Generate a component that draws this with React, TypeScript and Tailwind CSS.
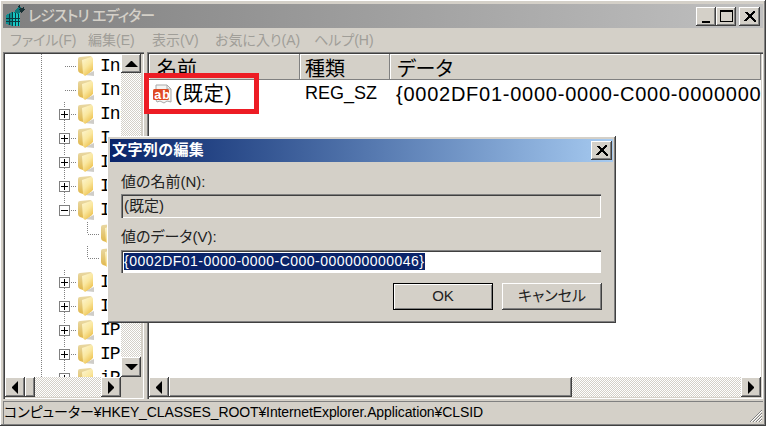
const jp = "font-['Liberation_Sans','Noto_Sans_CJK_JP',sans-serif] [font-feature-settings:'palt']";
const raised = "bg-[#d4d0c8] shadow-[inset_-1px_-1px_0_#404040,inset_1px_1px_0_#ffffff,inset_-2px_-2px_0_#808080]";
const sunken = "shadow-[inset_1px_1px_0_#808080,inset_2px_2px_0_#404040,inset_-1px_-1px_0_#ffffff]";
const dither = "bg-[repeating-conic-gradient(#d4d0c8_0_25%,#ffffff_0_50%)] bg-[length:2px_2px]";

type Kind = "leaf" | "plus" | "minus" | "child";

const treeRows: { label: string; kind: Kind }[] = [
  { label: "Ins", kind: "leaf" },
  { label: "Ins", kind: "leaf" },
  { label: "Ins", kind: "plus" },
  { label: "I", kind: "plus" },
  { label: "I", kind: "plus" },
  { label: "I", kind: "plus" },
  { label: "I", kind: "minus" },
  { label: "", kind: "child" },
  { label: "", kind: "child" },
  { label: "I", kind: "plus" },
  { label: "I", kind: "plus" },
  { label: "IP", kind: "plus" },
  { label: "IP", kind: "plus" },
  { label: "iP", kind: "plus" },
];

function Folder() {
  return (
    <svg width="17" height="21" viewBox="0 0 17 21" className="shrink-0">
      <defs>
        <linearGradient id="foldFront" x1="0" y1="0" x2="0.6" y2="1">
          <stop offset="0" stopColor="#fdf6d2" />
          <stop offset="0.55" stopColor="#fae79f" />
          <stop offset="1" stopColor="#eec24e" />
        </linearGradient>
        <linearGradient id="foldBack" x1="0" y1="0" x2="0" y2="1">
          <stop offset="0" stopColor="#e9d9a6" />
          <stop offset="1" stopColor="#e0b648" />
        </linearGradient>
      </defs>
      <path d="M7 19 L16 20 L16 15 Z" fill="#a8a49a" opacity="0.55" />
      <path d="M0 3 Q0 1 2 1 L12 0 Q14 0 14 2 L14 15 L8 19 L2 17 Q0 16 0 14 Z" fill="url(#foldBack)" />
      <path d="M4 4 L13 1 Q15 1 15 3 L15 14 L7 20 L5 18 Z" fill="url(#foldFront)" />
    </svg>
  );
}

function Gutter({ kind }: { kind: Kind }) {
  const child = kind === "child";
  return (
    <svg width={child ? 96 : 73} height="24" className="shrink-0" shapeRendering="crispEdges">
      <line x1="36.5" y1="0" x2="36.5" y2="24" stroke="#808080" strokeDasharray="1 1" />
      {kind !== "leaf" && !child && <line x1="59.5" y1="0" x2="59.5" y2="6" stroke="#808080" strokeDasharray="1 1" />}
      {kind === "plus" && <line x1="59.5" y1="18" x2="59.5" y2="24" stroke="#808080" strokeDasharray="1 1" />}
      <line x1="60" y1="12.5" x2="71" y2="12.5" stroke="#808080" strokeDasharray="1 1" opacity={child ? 0 : 1} />
      {(kind === "plus" || kind === "minus") && (
        <g>
          <rect x="54.5" y="7.5" width="10" height="10" fill="#fff" stroke="#808080" />
          <line x1="56" y1="12.5" x2="63" y2="12.5" stroke="#000" />
          {kind === "plus" && <line x1="59.5" y1="9" x2="59.5" y2="16" stroke="#000" />}
        </g>
      )}
      {child && (
        <g>
          <line x1="82.5" y1="0" x2="82.5" y2="12" stroke="#808080" strokeDasharray="1 1" />
          <line x1="83" y1="12.5" x2="95" y2="12.5" stroke="#808080" strokeDasharray="1 1" />
        </g>
      )}
    </svg>
  );
}

function Arrow({ dir }: { dir: "up" | "down" | "left" | "right" }) {
  const pts = {
    up: "0,7 6,1 7,1 13,7",
    down: "0,1 13,1 7,7 6,7",
    left: "6,0 6,13 0,7 0,6",
    right: "0,0 0,13 6,7 6,6",
  }[dir];
  const vertical = dir === "up" || dir === "down";
  return (
    <svg width={vertical ? 13 : 7} height={vertical ? 8 : 13}>
      <polygon points={pts} fill="#000" />
    </svg>
  );
}

function ScrollButton({ dir, className = "" }: { dir: "up" | "down" | "left" | "right"; className?: string }) {
  return (
    <div className={`${raised} flex shrink-0 items-center justify-center ${className}`}>
      <Arrow dir={dir} />
    </div>
  );
}

function WindowButton({ children, className = "" }: { children: React.ReactNode; className?: string }) {
  return <div className={`${raised} flex h-[19px] items-center justify-center ${className}`}>{children}</div>;
}

function CloseGlyph() {
  return (
    <svg width="12" height="11" shapeRendering="crispEdges">
      <path d="M1 1 L11 10 M11 1 L1 10 M2 1 L12 10 M10 1 L0 10" stroke="#000" strokeWidth="1.4" />
    </svg>
  );
}

function RegistryIcon() {
  return (
    <svg width="21" height="22" viewBox="0 0 21 22" className="shrink-0" shapeRendering="crispEdges">
      <path d="M1 10 L7 7 L15 8 L15 21 L7 21 L1 19 Z" fill="#16c8c4" />
      <path d="M1 10 L7 7 L7 21 L1 19 Z" fill="#0e8f90" />
      <path d="M1 13 L15 13 M1 16 L15 16 M4 9 V20 M7 7 V21 M10 8 V21 M13 8 V21" stroke="#0b3a40" strokeWidth="1" />
      <path d="M9 8 L12 3 L14 1 L17 4 L14 9 Z" fill="#0c7a7c" />
      <path d="M14 4 L19 2 L20 5 L16 8 Z" fill="#173034" />
      <path d="M12 1 L15 0 L15 3 Z" fill="#173034" />
    </svg>
  );
}

function StringIcon() {
  return (
    <svg width="20" height="22" viewBox="0 0 20 22" className="shrink-0">
      <path d="M4 2 H15 L19 6 V19 L15 18 L12 20 L8 18 L5 19 L4 17 Z" fill="#f4f4f2" stroke="#a9a9a9" />
      <path d="M15 2 V6 H19" fill="none" stroke="#a9a9a9" />
      <rect x="1" y="6" width="16" height="11" rx="1.5" fill="#e04a24" />
      <text x="2.2" y="15.5" fontSize="12.5" fontWeight="700" fill="#fff" fontFamily="Liberation Sans">ab</text>
    </svg>
  );
}

function Tree() {
  return (
    <div className="flex min-h-0 flex-1">
      <div className="min-h-0 w-[116px] overflow-hidden bg-white">
        {treeRows.map((row, i) => (
          <div key={i} className="flex h-[24px] items-center overflow-hidden whitespace-nowrap">
            <Gutter kind={row.kind} />
            <Folder />
            {row.label && (
              <span className="ml-[5px] font-['Liberation_Mono',monospace] text-[18px] tracking-[-1px] text-black">
                {row.label}
              </span>
            )}
          </div>
        ))}
      </div>
      <div className={`flex w-[20px] shrink-0 flex-col ${dither}`}>
        <ScrollButton dir="up" className="h-[19px]" />
        <div className="flex-1" />
        <ScrollButton dir="down" className="h-[20px]" />
      </div>
    </div>
  );
}

function HScroll({ thumb, className = "" }: { thumb: string; className?: string }) {
  return (
    <div className={`flex h-[20px] shrink-0 ${dither} ${className}`}>
      <ScrollButton dir="left" className="w-[20px]" />
      <div className={`${raised} shrink-0 ${thumb}`} />
      <div className="flex-1" />
      <ScrollButton dir="right" className="w-[20px]" />
    </div>
  );
}

function ListHeader({ label, className = "" }: { label: string; className?: string }) {
  return (
    <div className={`flex h-[26px] shrink-0 items-center bg-[#d4d0c8] pt-[3px] text-[20px] text-black shadow-[inset_-1px_-1px_0_#808080,inset_1px_1px_0_#ffffff] ${className}`}>
      {label}
    </div>
  );
}

function EditDialog() {
  return (
    <div className={`absolute left-[107px] top-[136px] flex h-[187px] w-[509px] flex-col bg-[#d4d0c8] p-[3px] shadow-[inset_-1px_-1px_0_#404040,inset_1px_1px_0_#ffffff,inset_-2px_-2px_0_#808080] ${jp}`}>
      <div className="flex h-[23px] shrink-0 items-center justify-between bg-gradient-to-r from-[#0a246a] to-[#a6caf0] pl-[2px] pr-[1px]">
        <span className="text-[15px] font-bold tracking-[0.4px] text-white">文字列の編集</span>
        <WindowButton className="w-[21px]">
          <CloseGlyph />
        </WindowButton>
      </div>
      <div className="flex flex-1 flex-col px-[11px] text-[15px] text-[#222]">
        <div className="mt-[9px] h-[23px] leading-[22px]">値の名前(N):</div>
        <div className={`flex h-[24px] w-[480px] items-center pl-[3px] ${sunken}`}>(既定)</div>
        <div className="mt-[7px] h-[25px] leading-[24px]">値のデータ(V):</div>
        <div className={`flex h-[23px] w-[480px] items-center bg-white pl-[3px] ${sunken}`}>
          <span className="bg-[#0a246a] pr-[1px] text-[14px] leading-[17px] tracking-[0.47px] text-white">
            {"{0002DF01-0000-0000-C000-000000000046}"}
          </span>
        </div>
        <div className="mt-[10px] flex justify-end gap-[9px]">
          <div className="flex h-[27px] w-[100px] items-center justify-center bg-[#d4d0c8] shadow-[inset_0_0_0_1px_#000000,inset_2px_2px_0_#ffffff,inset_-2px_-2px_0_#808080]">
            OK
          </div>
          <div className={`${raised} flex h-[27px] w-[100px] items-center justify-center`}>キャンセル</div>
        </div>
      </div>
    </div>
  );
}

export default function App() {
  const menus = [
    { label: "ファイル(F)", w: "w-[78px]" },
    { label: "編集(E)", w: "w-[64px]" },
    { label: "表示(V)", w: "w-[63px]" },
    { label: "お気に入り(A)", w: "w-[99px]" },
    { label: "ヘルプ(H)", w: "w-[60px]" },
  ];

  return (
    <div className={`relative flex h-[426px] w-[766px] flex-col overflow-hidden bg-[#d4d0c8] px-[3px] pb-[2px] pt-[4px] shadow-[inset_-1px_-1px_0_#404040,inset_1px_1px_0_#ffffff,inset_-2px_-2px_0_#808080] ${jp}`}>
      <div className="flex h-[24px] shrink-0 items-center bg-gradient-to-r from-[#808080] to-[#c0c0c0] pl-[2px] pr-[3px]">
        <RegistryIcon />
        <span className="ml-[2px] text-[15px] font-medium tracking-[-0.9px] text-[#d4d0c8]">レジストリ エディター</span>
        <div className="ml-auto flex">
          <WindowButton className="w-[20px] items-end pb-[3px]">
            <div className="h-[2px] w-[8px] bg-black" />
          </WindowButton>
          <WindowButton className="w-[20px]">
            <div className="h-[12px] w-[13px] border border-t-2 border-black" />
          </WindowButton>
          <WindowButton className="ml-[3px] w-[21px]">
            <CloseGlyph />
          </WindowButton>
        </div>
      </div>

      <div className="flex h-[24px] shrink-0 items-center whitespace-nowrap pl-[7px] text-[14px] text-[#a09e98]">
        {menus.map((m) => (
          <span key={m.label} className={m.w}>
            {m.label}
          </span>
        ))}
      </div>

      <div className="flex min-h-0 flex-1 gap-[3px]">
        <div className={`flex w-[141px] shrink-0 flex-col p-[2px] ${sunken}`}>
          <Tree />
          <div className="flex shrink-0">
            <HScroll thumb="w-[10px]" className="w-[116px]" />
            <div className="w-[20px] bg-[#d4d0c8]" />
          </div>
        </div>

        <div className={`flex min-w-0 flex-1 flex-col p-[2px] ${sunken}`}>
          <div className="flex shrink-0">
            <ListHeader label="名前" className="w-[151px] pl-[8px]" />
            <ListHeader label="種類" className="w-[90px] pl-[5px]" />
            <ListHeader label="データ" className="flex-1 pl-[7px]" />
          </div>
          <div className="min-h-0 flex-1 overflow-hidden bg-white">
            <div className="flex h-[27px] items-center whitespace-nowrap text-black">
              <div className="flex w-[151px] shrink-0 items-center pl-[3px] text-[20px] tracking-[1px]">
                <StringIcon />
                <span className="ml-[3px]">(既定)</span>
              </div>
              <div className="w-[90px] shrink-0 pl-[5px] text-[18px]">REG_SZ</div>
              <div className="pl-[6px] text-[20px] tracking-[0.75px]">
                {"{0002DF01-0000-0000-C000-000000000046}"}
              </div>
            </div>
          </div>
          <HScroll thumb="w-[403px]" />
        </div>
      </div>

      <div className="mt-[2px] flex h-[23px] shrink-0 items-center overflow-hidden whitespace-nowrap pl-[1px] text-[14px] tracking-[-0.1px] text-black shadow-[inset_1px_1px_0_#808080]">
        コンピューター¥HKEY_CLASSES_ROOT¥InternetExplorer.Application¥CLSID
      </div>

      <svg width="14" height="14" className="absolute bottom-[3px] right-[3px]" shapeRendering="crispEdges">
        <path d="M13 1 L1 13 M13 4 L4 13 M13 7 L7 13 M13 10 L10 13" stroke="#808080" />
        <path d="M13 2 L2 13 M13 5 L5 13 M13 8 L8 13 M13 11 L11 13" stroke="#ffffff" />
      </svg>

      <div className="absolute left-[144px] top-[73px] h-[41px] w-[115px] border-[5px] border-[#ed1c24]" />

      <EditDialog />
    </div>
  );
}
